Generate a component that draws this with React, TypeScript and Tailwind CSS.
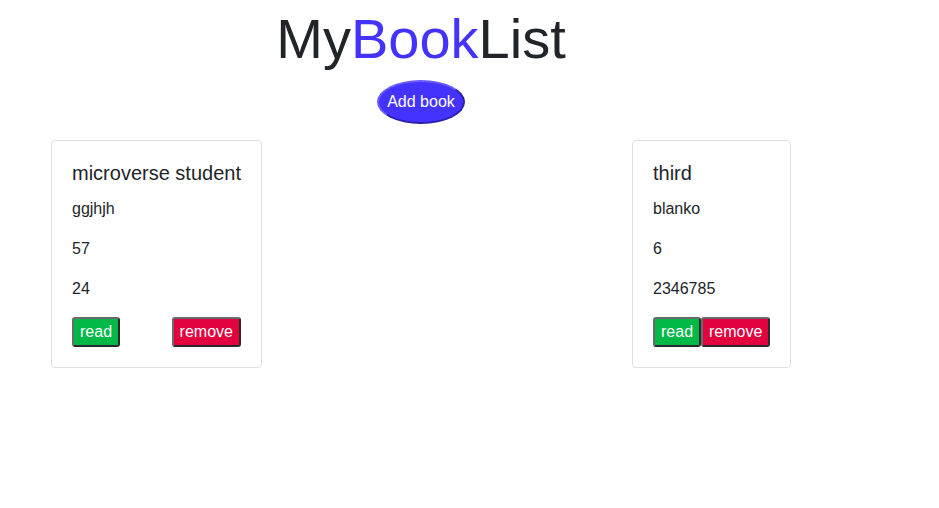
const books = [
  { id: 1, title: 'microverse student', author: 'ggjhjh', pages: '57', progress: '24', spread: true },
  { id: 2, title: 'third', author: 'blanko', pages: '6', progress: '2346785', spread: false },
];

export default function App() {
  return (
    <div className="min-h-[508px] bg-white font-['Liberation_Sans',Arial,sans-serif] text-[#212529]">
      {/* Header */}
      <div className="flex w-[842px] flex-col items-center pt-[5px]">
        <h1 className="text-[56px] leading-[1.2] font-normal">
          My<span className="text-[#4433ff]">Book</span>List
        </h1>
        <button className="mt-2 rounded-[50%] border-2 border-t-[#6a5cff] border-l-[#6a5cff] border-r-[#2a1fb0] border-b-[#2a1fb0] bg-[#4433ff] px-[8px] py-[8px] text-base leading-6 text-white">
          Add book
        </button>
      </div>

      {/* Books */}
      <div className="mt-4 grid grid-cols-[581px_auto] items-start justify-items-start pl-[51px]">
        {books.map((book) => (
          <div key={book.id} className="rounded-[4px] border border-[#dfdfdf] p-5">
            <h5 className="mb-3 text-xl leading-[1.2] whitespace-nowrap">{book.title}</h5>
            <p className="mb-4 text-base leading-6">{book.author}</p>
            <p className="mb-4 text-base leading-6">{book.pages}</p>
            <p className="mb-4 text-base leading-6">{book.progress}</p>
            <div className={book.spread ? 'flex justify-between' : 'flex'}>
              <button className="rounded-[3px] border-2 border-t-[#6b6b6b] border-l-[#6b6b6b] border-r-[#2a2a2a] border-b-[#2a2a2a] bg-[#00b946] px-[6px] py-[1px] text-base leading-6 text-white">
                read
              </button>
              <button className="rounded-[3px] border-2 border-t-[#6b6b6b] border-l-[#6b6b6b] border-r-[#2a2a2a] border-b-[#2a2a2a] bg-[#e3003f] px-[6px] py-[1px] text-base leading-6 text-white">
                remove
              </button>
            </div>
          </div>
        ))}
      </div>
    </div>
  );
}
